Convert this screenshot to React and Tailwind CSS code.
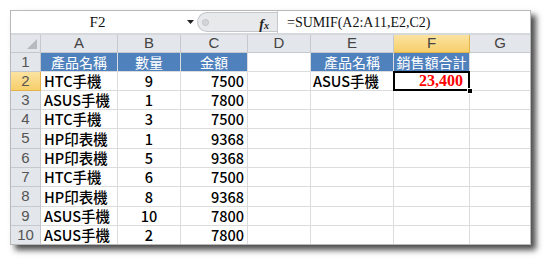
import React from "react";

const cols = [
  { k: "A", w: "w-[77px]" },
  { k: "B", w: "w-[63px]" },
  { k: "C", w: "w-[67px]" },
  { k: "D", w: "w-[63px]" },
  { k: "E", w: "w-[83px]" },
  { k: "F", w: "w-[76px]" },
  { k: "G", w: "w-[61px]" },
];

const data = [
  ["HTC手機", "9", "7500"],
  ["ASUS手機", "1", "7800"],
  ["HTC手機", "3", "7500"],
  ["HP印表機", "1", "9368"],
  ["HP印表機", "5", "9368"],
  ["HTC手機", "6", "7500"],
  ["HP印表機", "8", "9368"],
  ["ASUS手機", "10", "7800"],
  ["ASUS手機", "2", "7800"],
];

const rowH = ["h-[19px]", "h-[19px]", "h-[19px]", "h-[19px]", "h-[20px]", "h-[19px]", "h-[19px]", "h-[20px]", "h-[19px]", "h-[19px]"];

const cellFont = { fontFamily: '"Noto Sans CJK TC", "Noto Sans", sans-serif' };

function Cell({ w, className = "", children }) {
  return (
    <div className={`${w} shrink-0 h-full border-r border-b border-[#dadcdd] flex items-center ${className}`}>
      {children}
    </div>
  );
}

function BlueCell({ w, children }) {
  return (
    <div className={`${w} shrink-0 h-full bg-[#4f81bd] border-r border-b border-[#dadcdd] flex items-center justify-center text-white text-[14px] font-normal`}>
      {children}
    </div>
  );
}

export default function App() {
  return (
    <div className="w-[548px] h-[263px] bg-white pt-[10px] pl-[10px] overflow-hidden">
      <div className="w-[521px] h-[235px] border border-[#b9b9b9] bg-white shadow-[5px_5px_6px_rgba(0,0,0,0.7)] overflow-hidden flex flex-col">
        {/* formula bar */}
        <div className="h-[22px] flex items-stretch bg-white shrink-0">
          <div
            className="w-[173px] flex items-center justify-center text-[15px] text-[#111]"
            style={{ fontFamily: '"Liberation Serif", serif' }}
          >
            F2
          </div>
          <div className="w-[13px] flex items-center justify-center">
            <svg width="7" height="4" viewBox="0 0 7 4">
              <path d="M0 0h7L3.5 4z" fill="#222" />
            </svg>
          </div>
          <div className="w-[80px] my-[1px] bg-[#e8e9eb] rounded-l-full border border-r-0 border-[#c4c7cb] flex items-center pl-[4px] relative">
            <div className="w-[7px] h-[7px] rounded-full bg-[#d3d5d8] border border-[#c0c3c7]" />
            <span
              className="absolute right-[8px] top-[1px] text-[14px] italic font-bold text-[#222]"
              style={{ fontFamily: '"Liberation Serif", serif' }}
            >
              f<span className="text-[10px]">x</span>
            </span>
          </div>
          <div
            className="flex-1 border-l border-[#c4c7cb] flex items-center pl-[9px] text-[14px] text-[#111]"
            style={{ fontFamily: '"Liberation Serif", serif' }}
          >
            =SUMIF(A2:A11,E2,C2)
          </div>
        </div>
        <div className="h-[2px] bg-[#d5d8dc] shrink-0" />

        {/* column header */}
        <div
          className="h-[18px] flex shrink-0 text-[15px] text-[#444]"
          style={{ fontFamily: '"Liberation Sans", sans-serif' }}
        >
          <div className="w-[30px] shrink-0 bg-[#e3e6ea] border-r border-b border-[#c5c9ce] relative">
            <svg className="absolute right-[3px] bottom-[3px]" width="10" height="10" viewBox="0 0 10 10">
              <path d="M10 0V10H0z" fill="#b7bbc0" />
            </svg>
          </div>
          {cols.map((c) => (
            <div
              key={c.k}
              className={`${c.w} shrink-0 flex items-center justify-center border-r border-b ${
                c.k === "F"
                  ? "bg-gradient-to-b from-[#fbe3a0] to-[#f7cf6a] border-[#e1b34a]"
                  : "bg-[#e3e6ea] border-[#c5c9ce]"
              }`}
            >
              {c.k}
            </div>
          ))}
        </div>

        {/* rows */}
        {rowH.map((h, i) => {
          const r = i + 1;
          const hdrCls =
            r === 2
              ? "bg-gradient-to-b from-[#fbe3a0] to-[#f7cf6a] border-[#e1b34a]"
              : "bg-[#e3e6ea] border-[#c5c9ce]";
          return (
            <div key={r} className={`${h} flex shrink-0 text-[14.5px] font-medium text-black`} style={cellFont}>
              <div
                className={`w-[30px] shrink-0 flex items-center justify-center border-r border-b text-[15px] font-normal text-[#555] ${hdrCls}`}
                style={{ fontFamily: '"Liberation Sans", sans-serif' }}
              >
                {r}
              </div>
              {r === 1 ? (
                <>
                  <BlueCell w="w-[77px]">產品名稱</BlueCell>
                  <BlueCell w="w-[63px]">數量</BlueCell>
                  <BlueCell w="w-[67px]">金額</BlueCell>
                  <Cell w="w-[63px]" />
                  <BlueCell w="w-[83px]">產品名稱</BlueCell>
                  <BlueCell w="w-[76px]">銷售額合計</BlueCell>
                  <Cell w="w-[61px]" />
                </>
              ) : (
                <>
                  <Cell w="w-[77px]" className="pl-[3px]">{data[r - 2][0]}</Cell>
                  <Cell w="w-[63px]" className="justify-center">{data[r - 2][1]}</Cell>
                  <Cell w="w-[67px]" className="justify-end pr-[3px]">{data[r - 2][2]}</Cell>
                  <Cell w="w-[63px]" />
                  <Cell w="w-[83px]" className="pl-[2px]">{r === 2 ? "ASUS手機" : ""}</Cell>
                  {r === 2 ? (
                    <div className="w-[76px] shrink-0 h-full relative">
                      <div
                        className="absolute left-[-1px] top-[-1px] right-0 bottom-0 border-2 border-black flex items-center justify-end pr-[5px] text-[16px] font-bold text-[#ff0000]"
                        style={{ fontFamily: '"Liberation Serif", serif' }}
                      >
                        23,400
                      </div>
                      <div className="absolute right-[-3px] bottom-[-3px] w-[6px] h-[6px] bg-black border border-white" />
                    </div>
                  ) : (
                    <Cell w="w-[76px]" />
                  )}
                  <Cell w="w-[61px]" />
                </>
              )}
            </div>
          );
        })}
      </div>
    </div>
  );
}
